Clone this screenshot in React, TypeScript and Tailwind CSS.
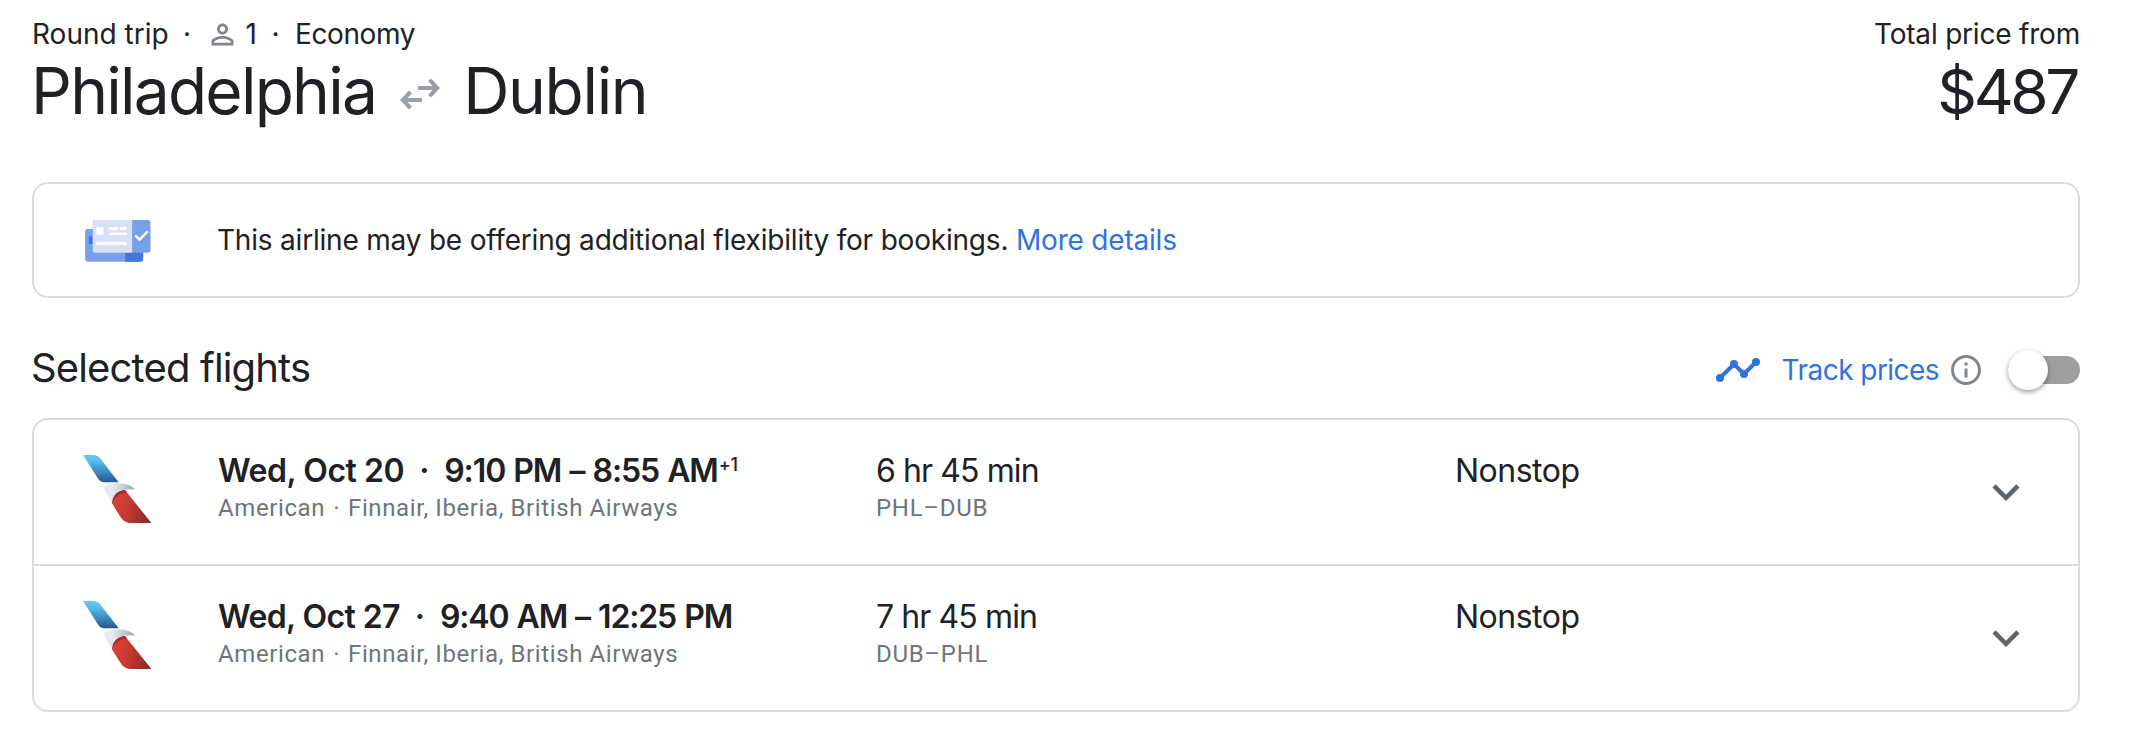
import React, { useState } from "react";

type Flight = {
  date: string;
  dateClass: string;
  time: string;
  timeClass: string;
  plusDays?: string;
  duration: string;
  route: string;
  stops: string;
};

const flights: Flight[] = [
  {
    date: "Wed, Oct 20",
    dateClass: "tracking-[-0.45px]",
    time: "9:10 PM – 8:55 AM",
    timeClass: "tracking-[-1.1px] [word-spacing:1.2px]",
    plusDays: "+1",
    duration: "6 hr 45 min",
    route: "PHL–DUB",
    stops: "Nonstop",
  },
  {
    date: "Wed, Oct 27",
    dateClass: "tracking-[-0.6px]",
    time: "9:40 AM – 12:25 PM",
    timeClass: "tracking-[-1.15px] [word-spacing:1.2px]",
    duration: "7 hr 45 min",
    route: "DUB–PHL",
    stops: "Nonstop",
  },
];

function PersonIcon() {
  return (
    <svg className="size-[33px] shrink-0" viewBox="0 0 24 24" fill="#80868b">
      <path d="M12 6c1.1 0 2 .9 2 2s-.9 2-2 2-2-.9-2-2 .9-2 2-2m0 9c2.7 0 5.8 1.29 6 2v1H6v-.99c.2-.72 3.3-2.01 6-2.01m0-11C9.79 4 8 5.79 8 8s1.79 4 4 4 4-1.79 4-4-1.79-4-4-4zm0 9c-2.67 0-8 1.34-8 4v3h16v-3c0-2.66-5.33-4-8-4z" />
    </svg>
  );
}

function SwapIcon() {
  return (
    <svg
      className="h-8 w-10 shrink-0"
      viewBox="0 0 40 32"
      fill="none"
      stroke="#9aa0a6"
      strokeWidth="4"
    >
      <path d="M18 10H37M29.5 1.8L37.3 10L29.5 18.2" />
      <path d="M22 22H3M10.5 13.8L2.7 22L10.5 30.2" />
    </svg>
  );
}

function TicketIcon() {
  return (
    <svg className="mt-0.5 h-[42px] w-[66px] shrink-0" viewBox="196 150 197 126">
      <rect x="196" y="177" width="174" height="98" rx="8" fill="#789fe9" />
      <path d="M316 177h46a8 8 0 0 1 8 8v82a8 8 0 0 1-8 8h-46z" fill="#4178dc" />
      <path d="M207 199h12v23h-12z" fill="#4178dc" />
      <rect x="219" y="150" width="173" height="98" rx="8" fill="#789fe9" />
      <path d="M227 150h110v98H227a8 8 0 0 1-8-8v-82a8 8 0 0 1 8-8z" fill="#d6e1f8" />
      <path
        d="M229 172h22v22h-22zM267 171h27v9h-27zM300 171h21v9h-21zM267 188h54v7h-54zM229 215h92v10h-92z"
        fill="#fff"
      />
      <path d="M346 196l13 13 25-25" fill="none" stroke="#fff" strokeWidth="7" />
    </svg>
  );
}

function ChartIcon() {
  return (
    <svg className="h-6 w-11 shrink-0" viewBox="108 84 132 72" fill="#2f73e0">
      <path
        d="M120 144L162 102L192 132L228 96"
        fill="none"
        stroke="#2f73e0"
        strokeWidth="12"
      />
      <circle cx="120" cy="144" r="12" />
      <circle cx="162" cy="102" r="12" />
      <circle cx="192" cy="132" r="12" />
      <circle cx="228" cy="96" r="12" />
    </svg>
  );
}

function InfoIcon() {
  return (
    <svg className="size-9 shrink-0" viewBox="0 0 24 24" fill="#80868b">
      <path d="M11 7h2v2h-2zm0 4h2v6h-2zm1-9C6.48 2 2 6.48 2 12s4.48 10 10 10 10-4.48 10-10S17.52 2 12 2zm0 18c-4.41 0-8-3.59-8-8s3.59-8 8-8 8 3.59 8 8-3.59 8-8 8z" />
    </svg>
  );
}

function AirlineLogo({ id }: { id: number }) {
  return (
    <svg className="size-[68px]" viewBox="21 27 204 204">
      <defs>
        <linearGradient id={`blue${id}`} x1="0" y1="0" x2="0" y2="1">
          <stop offset="0" stopColor="#64cbf2" />
          <stop offset="0.25" stopColor="#55bce8" />
          <stop offset="1" stopColor="#245590" />
        </linearGradient>
        <linearGradient id={`red${id}`} x1="0" y1="0.4" x2="1" y2="0.6">
          <stop offset="0" stopColor="#dc4334" />
          <stop offset="0.4" stopColor="#c83a32" />
          <stop offset="1" stopColor="#8b2a28" />
        </linearGradient>
        <linearGradient id={`grey${id}`} x1="0" y1="0" x2="1" y2="0">
          <stop offset="0.25" stopColor="#e7ebf0" />
          <stop offset="0.6" stopColor="#c5cfd5" />
          <stop offset="1" stopColor="#93a1a9" />
        </linearGradient>
      </defs>
      <path
        d="M21 27H50C62 27 70 33 76 41L128 109H88C76 109 70 104 65 96Z"
        fill={`url(#blue${id})`}
      />
      <path
        d="M147 132L226 231H165C150 231 140 223 133 212L108 172C109 150 126 134 147 132Z"
        fill={`url(#red${id})`}
      />
      <path d="M108 172C107 150 125 132 147 132L153 140C133 141 116 150 108 172Z" fill="#a22d2c" />
      <path
        d="M93 116C120 110 162 109 177 131C165 129 152 129 141 132C120 137 108 151 108 173L89 138C83 127 84 119 93 116Z"
        fill={`url(#grey${id})`}
      />
    </svg>
  );
}

function Toggle() {
  const [on, setOn] = useState(false);
  return (
    <button
      role="switch"
      aria-checked={on}
      aria-label="Track prices"
      onClick={() => setOn(!on)}
      className={`flex h-7 w-[72px] items-center rounded-full ${
        on ? "justify-end bg-[#8ab4f8]" : "justify-start bg-[#9e9e9e]"
      }`}
    >
      <span className="size-10 shrink-0 rounded-full bg-white shadow-[0_2px_5px_rgba(0,0,0,0.4)]" />
    </button>
  );
}

function FlightRow({ flight, id }: { flight: Flight; id: number }) {
  return (
    <div className="box-content grid h-36 grid-cols-[184px_658px_579px_1fr]">
      <div className="pt-[35px] pl-[49px]">
        <AirlineLogo id={id} />
      </div>
      <div className="pt-[31px]">
        <div className="flex text-[32px] leading-10 font-semibold whitespace-nowrap">
          <span className={flight.dateClass}>{flight.date}</span>
          <span className="w-10 text-center">·</span>
          <span className={flight.timeClass}>{flight.time}</span>
          {flight.plusDays && (
            <span className="ml-px text-[18px] leading-[27px] font-medium tracking-[-0.4px]">
              {flight.plusDays}
            </span>
          )}
        </div>
        <p className="mt-px font-['Roboto',sans-serif] text-2xl leading-8 tracking-[0.6px] text-[#70757a]">
          American<span className="mx-[1.5px]"> · </span>Finnair, Iberia, British Airways
        </p>
      </div>
      <div className="pt-[31px]">
        <p className="text-[32px] leading-10 tracking-[-0.9px]">{flight.duration}</p>
        <p className="mt-px font-['Roboto',sans-serif] text-2xl leading-8 tracking-[0.7px] text-[#70757a]">
          {flight.route}
        </p>
      </div>
      <div className="flex justify-between">
        <p className="pt-[31px] text-[32px] leading-10 tracking-[-0.5px]">{flight.stops}</p>
        <button aria-label="Flight details" className="mr-[45px]">
          <svg className="size-[54px]" viewBox="0 0 24 24" fill="#5f6368">
            <path d="M16.59 8.59L12 13.17 7.41 8.59 6 10l6 6 6-6-1.41-1.41z" />
          </svg>
        </button>
      </div>
    </div>
  );
}

function App() {
  return (
    <div className="h-[734px] w-full bg-white px-[32px] pt-[15px] pr-[52px] font-['Inter',sans-serif] text-[#202124]">
      <header className="flex justify-between">
        <div>
          <div className="flex items-center text-[28px] leading-[39px]">
            <span>Round trip</span>
            <span className="w-[37px] text-center">·</span>
            <PersonIcon />
            <span className="ml-[7px]">1</span>
            <span className="mr-0.5 ml-px w-[35px] text-center">·</span>
            <span className="tracking-[-0.4px]">Economy</span>
          </div>
          <h1 className="mt-px -ml-px flex items-center text-[64px] leading-[72px]">
            <span className="tracking-[-1.75px]">Philadelphia</span>
            <span className="mt-[5px] mr-[23px] ml-6">
              <SwapIcon />
            </span>
            <span className="tracking-[-1.3px]">Dublin</span>
          </h1>
        </div>
        <div className="text-right">
          <p className="text-[28px] leading-[39px] tracking-[-0.2px]">Total price from</p>
          <p className="mt-0.5 mr-[3px] text-[62px] leading-[72px] tracking-[-3.4px]">$487</p>
        </div>
      </header>

      <div className="mt-[54px] flex h-[116px] items-center rounded-2xl border-2 border-[#dadbe0] pl-[51px]">
        <TicketIcon />
        <p className="ml-[66px] text-[28px] leading-10 tracking-[-0.2px]">
          This airline may be offering additional flexibility for bookings.{" "}
          <a className="text-[#2f73e0]">More details</a>
        </p>
      </div>

      <div className="mt-[52px] flex h-10 items-center justify-between">
        <h2 className="-ml-px self-start text-[40px] leading-9 tracking-[-0.85px]">
          Selected flights
        </h2>
        <div className="flex items-center">
          <ChartIcon />
          <span className="mr-[9px] ml-[22px] text-[28px] leading-10 tracking-[-0.55px] text-[#2f73e0]">
            Track prices
          </span>
          <InfoIcon />
          <div className="ml-6">
            <Toggle />
          </div>
        </div>
      </div>

      <div className="mt-7 divide-y-2 divide-[#dadbe0] rounded-2xl border-2 border-[#dadbe0]">
        {flights.map((flight, i) => (
          <FlightRow key={flight.date} flight={flight} id={i} />
        ))}
      </div>
    </div>
  );
}

export default App;
